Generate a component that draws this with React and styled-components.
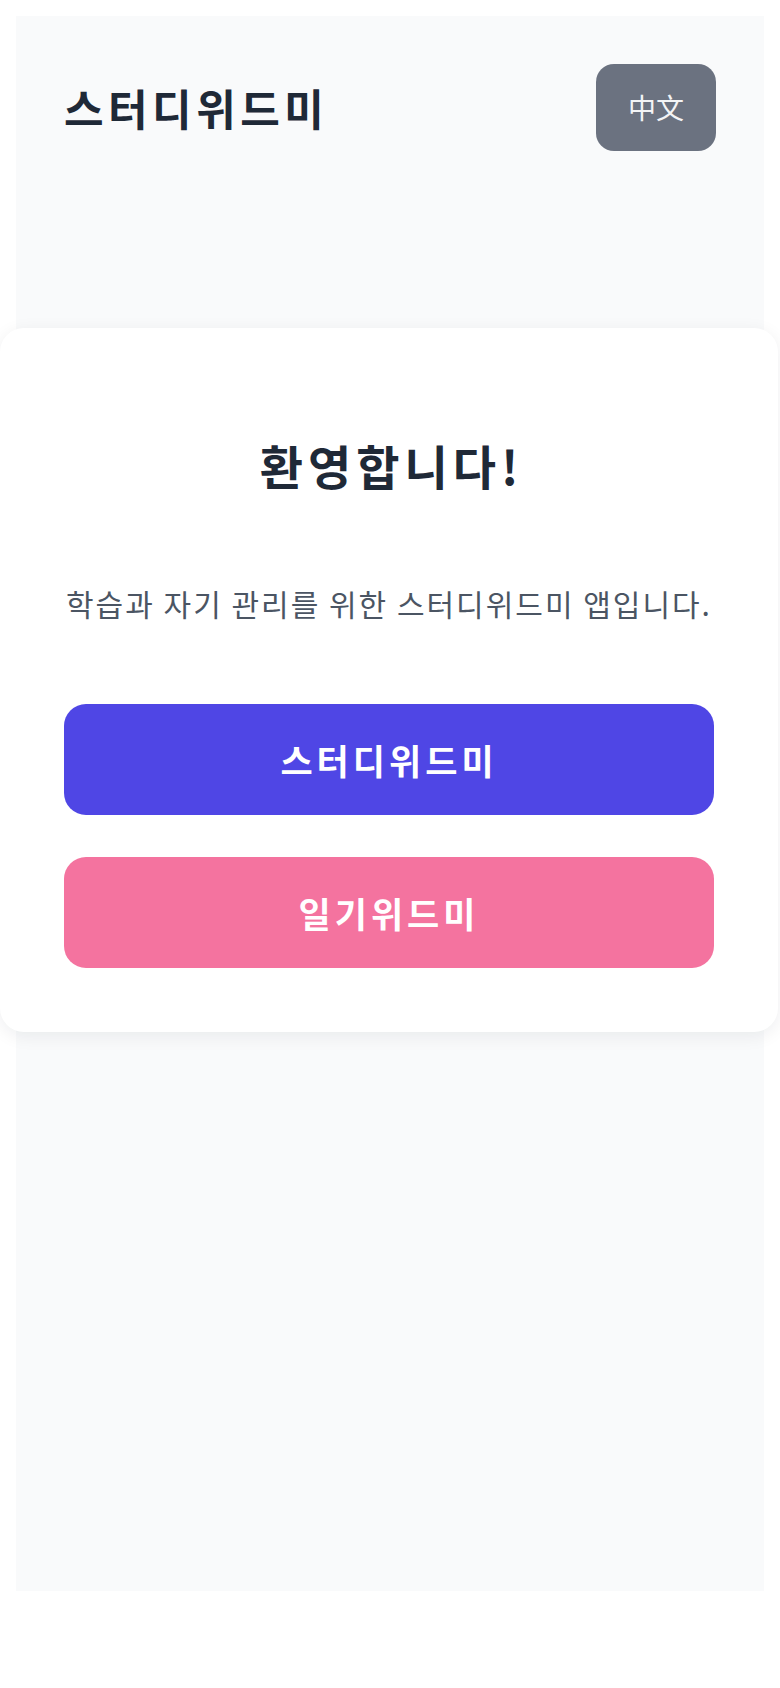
import React from "react";
import styled, { createGlobalStyle } from "styled-components";

const GlobalStyle = createGlobalStyle`
  html, body {
    margin: 0;
    padding: 0;
    background: #ffffff;
  }
  body {
    padding: 16px;
    font-family: "Noto Sans CJK KR", "Noto Sans CJK SC", "Noto Sans", sans-serif;
  }
  * {
    box-sizing: border-box;
  }
`;

const App = () => {
  return (
    <>
      <GlobalStyle />
      <Page>
        <Header>
          <Brand>스터디위드미</Brand>
          <LangButton lang="zh">中文</LangButton>
        </Header>
        <Main>
          <Card>
            <Heading>환영합니다!</Heading>
            <Description>학습과 자기 관리를 위한 스터디위드미 앱입니다.</Description>
            <Actions>
              <AppButton color="#4f46e5">스터디위드미</AppButton>
              <AppButton color="#f4739f">일기위드미</AppButton>
            </Actions>
          </Card>
        </Main>
      </Page>
    </>
  );
};

// 회색 바탕 영역
const Page = styled.div`
  display: flex;
  flex-direction: column;
  min-height: 1575px;
  background: #f9fafb;
`;

const Header = styled.header`
  display: flex;
  justify-content: space-between;
  align-items: center;
  padding: 48px;
`;

const Brand = styled.h1`
  margin: 0;
  font-size: 43px;
  font-weight: 600;
  letter-spacing: 4.5px;
  line-height: 1.2;
  color: #1f2937;
`;

const LangButton = styled.button`
  border: none;
  border-radius: 18px;
  padding: 24px 32px;
  background: #6b7280;
  color: #f3f4f6;
  font-family: inherit;
  font-size: 28px;
  line-height: 39px;
  cursor: pointer;
`;

const Main = styled.main`
  margin: 129px -14px 0 -16px;
`;

// 흰색 카드
const Card = styled.section`
  display: flex;
  flex-direction: column;
  align-items: stretch;
  padding: 64px;
  background: #ffffff;
  border-radius: 24px;
  box-shadow: 0 4px 18px rgba(17, 24, 39, 0.07);
`;

const Heading = styled.h2`
  margin: 43px 0 0;
  text-align: center;
  font-size: 47px;
  font-weight: 600;
  letter-spacing: 5px;
  text-indent: 5px;
  line-height: 60px;
  color: #1f2937;
`;

const Description = styled.p`
  margin: 86px -20px 0;
  text-align: center;
  white-space: nowrap;
  font-size: 30px;
  letter-spacing: 2px;
  line-height: 44px;
  color: #4b5563;
`;

const Actions = styled.div`
  display: flex;
  flex-direction: column;
  gap: 42px;
  margin-top: 79px;
`;

const AppButton = styled.button`
  border: none;
  border-radius: 22px;
  padding: 32px;
  background: ${({ color }) => color};
  color: #ffffff;
  font-family: inherit;
  font-size: 35px;
  font-weight: 600;
  letter-spacing: 4px;
  line-height: 47px;
  cursor: pointer;
`;

export default App;
